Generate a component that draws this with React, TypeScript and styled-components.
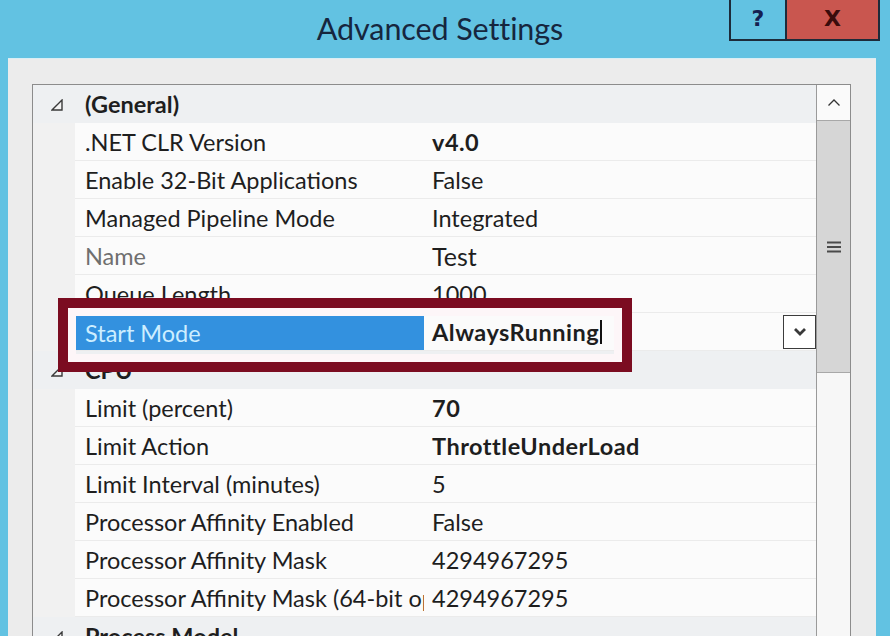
import React from "react";
import styled, { createGlobalStyle } from "styled-components";

const Global = createGlobalStyle`
  html, body { margin: 0; padding: 0; }
  body {
    width: 890px;
    height: 636px;
    overflow: hidden;
    background: #62c2e2;
    font-family: Lato, "Open Sans", sans-serif;
  }
`;

const Window = styled.div`
  width: 890px;
  height: 636px;
  display: flex;
  flex-direction: column;
  background: #62c2e2;
  overflow: hidden;
`;

const TitleBar = styled.div`
  height: 58px;
  flex: none;
  display: grid;
  grid-template-columns: 1fr auto 1fr;
  padding-right: 10px;
`;

const Title = styled.div`
  grid-column: 2;
  align-self: center;
  font-size: 30.5px;
  color: #16263e;
  letter-spacing: -0.1px;
  padding-bottom: 2px;
`;

const CaptionButtons = styled.div`
  grid-column: 3;
  justify-self: end;
  align-self: start;
  display: flex;
  height: 41px;
  box-sizing: border-box;
  border: 2px solid #1d2b3a;
  border-top: none;
`;

const CaptionButton = styled.div<{ $close?: boolean }>`
  width: ${(p) => (p.$close ? "91px" : "54px")};
  display: flex;
  align-items: center;
  justify-content: center;
  background: ${(p) => (p.$close ? "#c9564f" : "#62c2e2")};
  border-left: ${(p) => (p.$close ? "2px solid #1d2b3a" : "none")};
  color: ${(p) => (p.$close ? "#3a0c0c" : "#142050")};
  font-family: "DejaVu Sans", sans-serif;
  font-weight: 700;
  font-size: 22px;
  padding-bottom: 2px;
`;

const Body = styled.div`
  flex: 1;
  min-height: 0;
  margin: 0 14px 0 8px;
  background: #ececec;
  border-top: 1px solid #d9eef5;
  padding: 25px 25px 0 24px;
  display: flex;
`;

const Grid = styled.div`
  flex: 1;
  display: flex;
  border: 1px solid #8c8c8c;
  border-bottom: none;
  background: #fbfbfb;
  overflow: hidden;
`;

const List = styled.div`
  flex: 1;
  display: flex;
  flex-direction: column;
  position: relative;
`;

const Row = styled.div`
  flex: none;
  height: 38px;
  display: grid;
  grid-template-columns: 42px 349px 1fr;
  color: #1e1e1e;
  font-size: 23.5px;
`;

const CategoryRow = styled.div`
  flex: none;
  height: 38px;
  display: grid;
  grid-template-columns: 42px 1fr;
  align-items: center;
  background: #eef0f2;
  font-size: 23.5px;
  font-weight: 700;
  color: #1e1e1e;
`;

const Gutter = styled.div`
  background: #f1f1f1;
`;

const Expander = styled.div`
  display: flex;
  justify-content: flex-end;
  padding-right: 12px;
  padding-top: 2px;
`;

const CategoryLabel = styled.div`
  padding-left: 10px;
`;

const NameCell = styled.div<{ $selected?: boolean; $muted?: boolean }>`
  display: flex;
  align-items: center;
  padding-left: 10px;
  border-bottom: 1px solid #ebebeb;
  white-space: nowrap;
  overflow: hidden;
  margin-top: ${(p) => (p.$selected ? "2px" : "0")};
  background: ${(p) => (p.$selected ? "#3391df" : "transparent")};
  color: ${(p) => (p.$selected ? "#cdeeff" : p.$muted ? "#6f6f6f" : "#1e1e1e")};
`;

const ValueCell = styled.div<{ $bold?: boolean; $big?: boolean }>`
  display: flex;
  align-items: center;
  padding-left: 8px;
  border-bottom: 1px solid #ebebeb;
  font-weight: ${(p) => (p.$bold ? 700 : 400)};
  letter-spacing: ${(p) => (p.$bold ? "0.5px" : "0")};
  font-size: ${(p) => (p.$big ? "25px" : "23.5px")};
  white-space: nowrap;
`;

const Caret = styled.span`
  display: inline-block;
  width: 1.5px;
  height: 24px;
  background: #111;
  margin-left: 1px;
`;

const DropButton = styled.div`
  margin-left: auto;
  width: 33px;
  height: 34px;
  box-sizing: border-box;
  border: 1px solid #3c3c3c;
  background: #fff;
  display: flex;
  align-items: center;
  justify-content: center;
`;

const Highlight = styled.div`
  position: absolute;
  left: 25px;
  top: 213px;
  width: 574px;
  height: 74px;
  box-sizing: border-box;
  border: 10px solid #7b0c21;
  box-shadow: inset 0 0 0 8px #fdf6f8;
  pointer-events: none;
`;

const Scrollbar = styled.div`
  width: 33px;
  flex: none;
  border-left: 1px solid #9a9a9a;
  display: flex;
  flex-direction: column;
  background: #f7f7f7;
`;

const ScrollArrow = styled.div`
  height: 35px;
  flex: none;
  display: flex;
  align-items: center;
  justify-content: center;
  background: #fafafa;
  border-bottom: 1px solid #a8a8a8;
`;

const Thumb = styled.div`
  height: 251px;
  flex: none;
  background: #d6d6d6;
  border-bottom: 1px solid #a8a8a8;
  display: flex;
  align-items: center;
  justify-content: center;
`;

const Triangle = () => (
  <svg width="12" height="12" viewBox="0 0 12 12">
    <path d="M11 1 L11 11 L1 11 Z" fill="#f4f4f4" stroke="#3a3a3a" strokeWidth="1.4" strokeLinejoin="miter" />
  </svg>
);

type Prop = { name: string; value: string; bold?: boolean; muted?: boolean; big?: boolean };

const general: Prop[] = [
  { name: ".NET CLR Version", value: "v4.0", bold: true },
  { name: "Enable 32-Bit Applications", value: "False" },
  { name: "Managed Pipeline Mode", value: "Integrated" },
  { name: "Name", value: "Test", muted: true, big: true },
  { name: "Queue Length", value: "1000" },
];

const cpu: Prop[] = [
  { name: "Limit (percent)", value: "70", bold: true },
  { name: "Limit Action", value: "ThrottleUnderLoad", bold: true },
  { name: "Limit Interval (minutes)", value: "5" },
  { name: "Processor Affinity Enabled", value: "False" },
  { name: "Processor Affinity Mask", value: "4294967295" },
  { name: "Processor Affinity Mask (64-bit option)", value: "4294967295" },
];

const PropRow = ({ p }: { p: Prop }) => (
  <Row>
    <Gutter />
    <NameCell $muted={p.muted}>{p.name}</NameCell>
    <ValueCell $bold={p.bold} $big={p.big}>{p.value}</ValueCell>
  </Row>
);

const Category = ({ label }: { label: string }) => (
  <CategoryRow>
    <Expander>
      <Triangle />
    </Expander>
    <CategoryLabel>{label}</CategoryLabel>
  </CategoryRow>
);

export default function App() {
  return (
    <>
      <Global />
      <Window>
        <TitleBar>
          <Title>Advanced Settings</Title>
          <CaptionButtons>
            <CaptionButton>?</CaptionButton>
            <CaptionButton $close>X</CaptionButton>
          </CaptionButtons>
        </TitleBar>
        <Body>
          <Grid>
            <List>
              <Category label="(General)" />
              {general.map((p) => (
                <PropRow key={p.name} p={p} />
              ))}
              <Row>
                <Gutter />
                <NameCell $selected>Start Mode</NameCell>
                <ValueCell $bold>
                  AlwaysRunning
                  <Caret />
                  <DropButton>
                    <svg width="14" height="10" viewBox="0 0 14 10">
                      <path d="M2 2 L7 7 L12 2" fill="none" stroke="#3a3a3a" strokeWidth="2.8" />
                    </svg>
                  </DropButton>
                </ValueCell>
              </Row>
              <Category label="CPU" />
              {cpu.map((p) => (
                <PropRow key={p.name} p={p} />
              ))}
              <Category label="Process Model" />
              <Highlight />
            </List>
            <Scrollbar>
              <ScrollArrow>
                <svg width="14" height="9" viewBox="0 0 14 9">
                  <path d="M1.5 7.5 L7 2 L12.5 7.5" fill="none" stroke="#333" strokeWidth="1.3" />
                </svg>
              </ScrollArrow>
              <Thumb>
                <svg width="14" height="14" viewBox="0 0 14 14">
                  <path d="M0 2.5 H14 M0 7 H14 M0 11.5 H14" stroke="#4a4a4a" strokeWidth="2" />
                </svg>
              </Thumb>
            </Scrollbar>
          </Grid>
        </Body>
      </Window>
    </>
  );
}
